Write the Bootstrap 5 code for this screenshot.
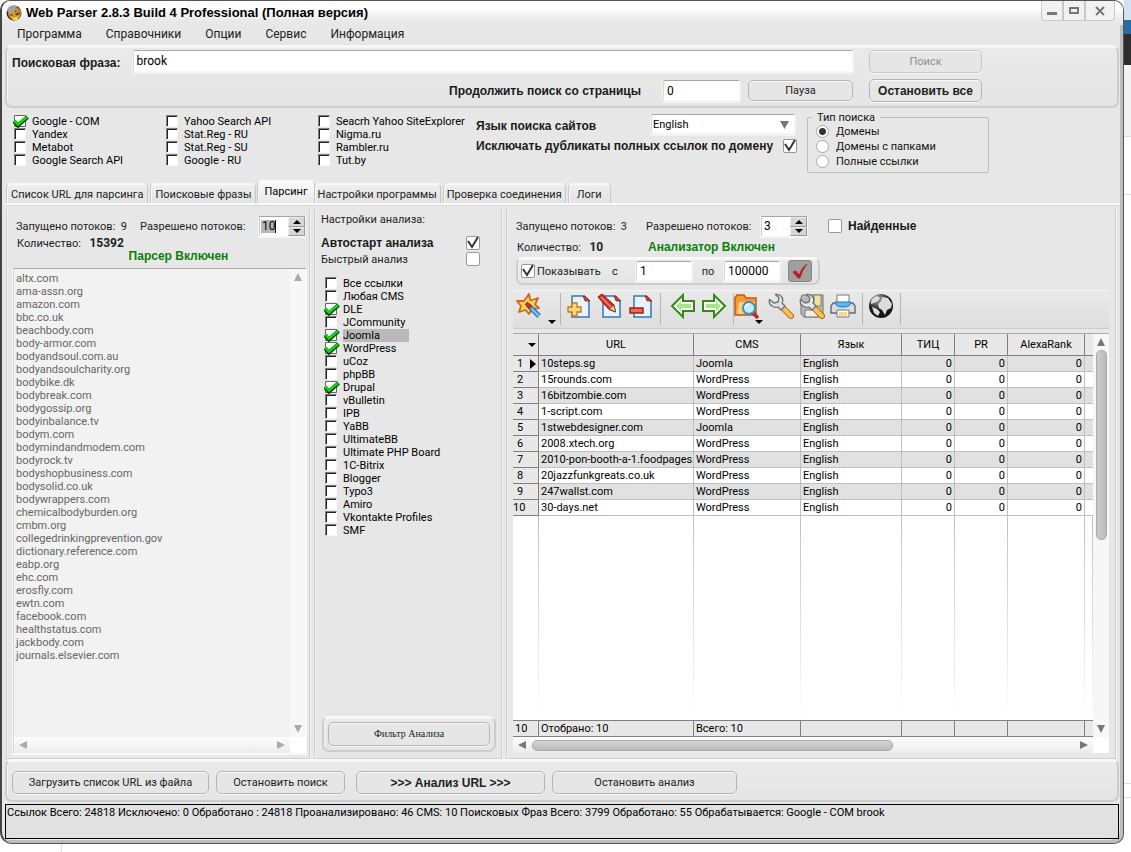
<!DOCTYPE html>
<html lang="ru">
<head>
<meta charset="utf-8">
<meta name="viewport" content="width=device-width, initial-scale=1">
<title>Web Parser 2.8.3 Build 4 Professional</title>
<link href="https://cdn.jsdelivr.net/npm/bootstrap@5.3.0/dist/css/bootstrap.min.css" rel="stylesheet">
<style>
:root{--face:#e7e7e7;--ui:Roboto,"Liberation Sans",sans-serif;--bold:"Liberation Sans",Arial,sans-serif}
html{background:linear-gradient(#d3e2ef 0 20px,#2b6ba3 20px 34px,#2d2d2d 34px 65px,#f3f3f3 65px 136px,#ddd 136px 137px,#fff 137px 194px,#ddd 194px 195px,#fff 195px 783px,#ddd 783px 784px,#fff 784px 797px,#ddd 797px 798px,#fff 798px) right top/7px 843px no-repeat,linear-gradient(#ddd,#ddd) 61px 100%/1px 10px no-repeat,#fff}
body{background:none;font-family:var(--ui);font-size:12px;line-height:13px;color:#111;min-height:100vh}
button,input,select{font-family:inherit;font-size:inherit;line-height:inherit;color:inherit}

/* Window frame */
.app{margin:0 7px 8px 0;background:var(--face);border:1px solid #555;border-left:2px solid #444;border-radius:10px 10px 10px 12px;box-shadow:inset -3px -3px 0 #bdbdbd;padding:0 4px 4px 3px;overflow:hidden}
.titlebar{height:24px;background:linear-gradient(#fff 0 6px,#fdfdfd 8px,#e8e8e8 20px);margin:0 -4px 0 -3px;padding-left:4px;font:bold 13px/16px var(--bold);color:#000}
.winbtns{height:20px;margin-right:8px}
.winbtns button{background:#f2f2f2;border:1px solid #c8c8c8;border-top:0;padding:0;width:22px}
.winbtns button:first-child{border-radius:0 0 0 4px}
.winbtns button:last-child{width:30px;border-radius:0 0 4px 0}
.menubar{height:20px;font:12px/16px var(--ui);padding:0 0 3px 12px;gap:24px}
.menubar a{color:#222;text-decoration:none}

/* Shared controls */
.panel{border:2px solid #cdcdcd;border-top-color:#fafafa;border-radius:7px;box-shadow:inset 1px 1px 0 #f4f4f4;background:linear-gradient(#eaeaea,#e5e5e5)}
.strong12{font:bold 12px/16px var(--bold);color:#1a1a1a}
.field{background:#fff;border:1px solid #f6f6f6;border-top:1px solid #a5a5a5;border-left-color:#d8d8d8;box-shadow:0 1px 0 1px #f3f3f3;border-radius:2px;padding:0 3px;height:21px;color:#000;min-width:0}
.pushbtn{background:#e6e6e6;border:1px solid #b5b5b5;border-radius:5px;box-shadow:inset 0 1px 0 #f8f8f8,0 1px 0 #f8f8f8;height:23px;padding:0;color:#222;font-size:11px}
.pushbtn.strong12{font-size:12px}
.pushbtn:disabled{color:#8e8e8e;border-color:#c6c6c6}
.tick{appearance:none;flex:none;width:14px;height:14px;margin:0;background:#fff;border:1px solid #999;border-radius:2px}
.tick:checked{background:#fff url("data:image/svg+xml,%3Csvg xmlns='http://www.w3.org/2000/svg' viewBox='0 0 12 12'%3E%3Cpath d='M1 4l4 6L11 0' fill='none' stroke='%23333' stroke-width='2'/%3E%3C/svg%3E") center no-repeat}
.lbl{font-size:11px;white-space:nowrap;color:#222}
.green{font:bold 12px/14px var(--bold);color:#0a7f0a}
.opt{display:flex;align-items:center;height:13px;white-space:nowrap;font-size:11px;color:#000}
.opt input{appearance:none;flex:none;width:12px;height:12px;margin:0 6px 1px 1px;background:#fff;border:1px solid #f8f8f8;border-top-color:#808080;border-left-color:#808080;box-shadow:inset 1px 1px 0 #222}
.opt input:checked{width:16px;height:13px;margin:0 3px 0 0;border:0;box-shadow:none;background:url("data:image/svg+xml,%3Csvg xmlns='http://www.w3.org/2000/svg' viewBox='0 0 16 13'%3E%3Cpath d='M1.500 .5h11v11h-11z' fill='%23fff' stroke='%23666'/%3E%3Cpath d='M1 6l4 4.500L14.500 2' fill='none' stroke='%23053b05' stroke-width='4'/%3E%3Cpath d='M1 5.500l4 4L14 2' fill='none' stroke='%2311d611' stroke-width='2.500'/%3E%3C/svg%3E") center/contain no-repeat}
.opt .picked{background:#b9b9b9;width:66px}

/* Search and options */
.search{height:63px;padding:3px 0 0 5px}
.phrase{width:841px}
.phrase .flex-grow-1{height:22px}
.more{margin-top:8px}
.more .field{width:77px;margin:0 8px 0 22px}
.more .pushbtn{width:105px;height:21px}
.stop{gap:6px}
.w-btn{width:113px}
.options{height:74px;padding:3px 0 0 8px}
.enginecol{width:152px;padding-top:4px}
.enginecol:nth-child(3){width:159px}
.langgrid{width:321px;padding-top:3px}
.lang{width:144px;appearance:none;background:#fff url("data:image/svg+xml,%3Csvg xmlns='http://www.w3.org/2000/svg' width='9' height='8'%3E%3Cpath d='M0 0h9L4.500 8z' fill='%23777'/%3E%3C/svg%3E") right 5px top 6px no-repeat;font-size:11px;height:20px;margin-right:2px;padding-left:1px}
.kind{width:182px;height:62px;border:1px solid #bdbdbd;border-radius:2px;padding:0 0 0 8px;margin:0 0 0 10px;min-width:0}
.kind legend{float:none;width:auto;font-size:11px;line-height:13px;margin:0 0 0 -4px;padding:0 5px}
.kind label{display:flex;align-items:center;height:15px;font-size:11px;gap:7px}
.kind input{appearance:none;width:13px;height:13px;margin:0;border:1px solid #a8a8a8;border-radius:50%;background:#fff}
.kind input:checked{background:radial-gradient(#333 0 3px,#fff 4px)}

/* Tabs */
.tabsrow{height:21px;padding-left:1px;gap:2px;align-items:flex-end}
.tabsrow button{border:1px solid #c6c6c6;border-top-color:#f8f8f8;border-bottom:0;border-radius:5px 5px 0 0;background:linear-gradient(#efefef,#e2e2e2);height:20px;padding:1px 3px 0;font-size:11px;color:#222;white-space:nowrap;box-shadow:inset 1px 1px 0 #fafafa}
.tabsrow .wide{padding:1px 4px 0}
.tabsrow .active{height:23px;padding:0 6px 2px;margin:0 -3px 0 -1px;background:linear-gradient(#fafafa,#e9e9e9);color:#000}
.page{border-top:2px solid #f9f9f9;box-shadow:inset 0 1px 0 #d8d8d8;flex:1 1 auto;padding:4px 3px 0 1px;gap:4px}
.col3{border:1px solid #cfcfcf;border-top:0;box-shadow:inset 1px 0 0 #f3f3f3,1px 0 0 #f3f3f3;background:var(--face);min-width:0}
.parser{flex:0 0 304px;padding:6px 3px 5px 6px}
.filters{flex:0 0 188px;padding:0 5px 6px 6px}
.analyzer{flex:1 1 0;padding:6px 6px 5px 6px}

/* Thread counters */
.spin{width:46px;height:20px;background:#fff;border-top:1px solid #a5a5a5;border-left:1px solid #ccc;box-shadow:0 1px 0 1px #f5f5f5}
.spin input{border:0;width:28px;padding:0 0 1px 2px;background:#fff;color:#000}
.spin .chosen{background:linear-gradient(#111,#111) 15px 3px/1px 13px no-repeat,linear-gradient(#b5b5b5,#b5b5b5) 1px 3px/14px 13px no-repeat,#fff}
.spin button{flex:1;border:1px solid #999;border-top-color:#eee;border-left-color:#eee;background:#d6d6d6;padding:0;display:flex;align-items:center;justify-content:center}
.prow{height:22px;padding-left:3px}
.l1{width:124px}.l2{width:119px}
.cnt{height:12px;margin-left:4px}
.cnt b{font-size:12px;padding-left:3px}
.gp{margin:0 0 5px;padding-left:38px}
.a1{width:130px}.a2{width:115px}
.found{gap:6px;margin-left:21px}
.a3{height:20px}
.a3 .l1{width:131px;height:auto}

/* URL list and scroll bars */
.listbox{background:#f2f2f2;border-top:1px solid #a9a9a9;border-left:1px solid #d5d5d5;box-shadow:0 1px 0 1px #f8f8f8}
.sites{font-size:11px;color:#666;padding:3px 0 0 2px;margin:0;list-style:none}
.vbar{flex:none;width:16px;background:#f7f7f7;padding:4px 0;align-items:center}
.hbar{height:16px;background:linear-gradient(#fdfdfd,#ececec);padding:0 5px;align-items:center}
.vthumb{width:11px;height:190px;border:1px solid #aaa;border-radius:5px;background:linear-gradient(90deg,#ccc,#bbb);margin-top:4px}
.hthumb{width:361px;height:11px;border:1px solid #aaa;border-radius:5px;background:linear-gradient(#d4d4d4,#bbb);margin-left:6px}

/* Filters */
.filters>.lbl{padding-top:4px}
.autorow{margin-top:8px;padding-right:16px;height:17px}
.fastrow{height:16px;padding-right:16px}
.cmslist{padding:10px 0 0 3px}
.filterbtn{margin-left:1px}
.filterbtn .pushbtn{font:10px/12px "Liberation Serif",serif;height:24px}

/* Analyzer */
.range{width:304px;height:28px;padding:0 6px 0 3px;margin:0 0 0 3px}
.range .field{width:56px;height:20px}
.r1{width:77px;padding-left:2px}.r2{width:24px}.r3{width:32px;text-align:center}
.okbtn{width:24px;height:22px;border:1px solid #888;border-radius:3px;background:#9f9f9f;padding:0}
.tools{height:39px;border-top:1px solid #f6f6f6;border-bottom:1px solid #ccc;margin-top:5px;background:linear-gradient(#e9e9e9,#dedede)}
.tools button{border:0;background:none;padding:0;width:31px;height:30px;display:flex;align-items:center;justify-content:center;flex:none}
.tools .drop{width:16px;height:34px;align-items:flex-end}
.tools .drop.over{margin-left:-12px;width:12px}
.divider{width:1px;height:32px;margin-top:2px;background:#b5b5b5;margin-right:2px;flex:none}
.gridbox{background:#fff;border-top:1px solid #a9a9a9;margin-top:4px}
.tablewrap{min-width:0}
.data{width:100%;table-layout:fixed;border-collapse:separate;border-spacing:0;font-size:11px;line-height:14px;color:#000}
.data td,.data th{padding:0 2px;height:16px;overflow:hidden;white-space:nowrap;border-right:1px solid #c0c0c0;border-bottom:1px solid #c0c0c0;font-weight:400}
.data td:nth-child(2){padding-right:0}
.data thead th{height:22px;text-align:center;background:#e8e8e8;border-color:#808080}
.data tbody th,.data tfoot td{background:#e8e8e8;border-color:#808080}
.data tbody th{text-align:left;padding-left:4px}
.data tbody tr:nth-child(odd) td{background:#e1e1e1}
.data .filler td,.data tbody .filler:nth-child(odd) td{height:auto;border-bottom:0;border-right:1px solid;border-image:linear-gradient(#c0c0c0,#fff) 1;background:#fff}
.data tfoot td{border-top:1px solid #808080;height:17px}
.data td:nth-child(n+5):not(:last-child){text-align:right}
.data .last{border-right:0}
.data .pointer{float:right;margin:2px 0 0}
.c1{width:26px}.c3{width:107px}.c4{width:101px}.c5{width:53px}.c7{width:77px}.c8{width:8px}

/* Bottom */
.bottom{height:43px;padding:4px 0 0 5px;gap:7px}
.b1{width:197px}.b2{width:129px}.b3{width:189px;margin-left:4px}.b4{width:185px}
.status{height:35px;border:1px solid #000;background:#e1e1e1;color:#000;font-size:11px;padding:1px;margin:2px 0 0;white-space:nowrap;overflow:hidden}
</style>
</head>
<body class="d-flex flex-column">
<main class="app flex-grow-1 d-flex flex-column">
 <header class="titlebar d-flex align-items-start">
  <svg class="mt-1 me-1 flex-shrink-0" width="16" height="16" viewBox="0 0 16 16"><circle cx="8" cy="8" r="7.500" fill="#3a2a18"/><path d="M1 5Q4 0 11 1L9 7 3 10z" fill="#a9a29a"/><path d="M9 2q6 1 6 6l-5-1z" fill="#c98a3a"/><path d="M2 9l7-2 6 1q-1 6-6 7Q4 15 2 9z" fill="#d99b21"/><path d="M4 9q1 3 3 1zM9 9q2 3 5-1z" fill="#33200c"/><path d="M5 12q4 2 8-1l-2 4H8z" fill="#ffd84a"/></svg>
  <span class="flex-grow-1 pt-1">Web Parser 2.8.3 Build 4 Professional (Полная версия)</span>
  <div class="winbtns d-flex">
   <button type="button" aria-label="Свернуть"><svg width="12" height="10"><path d="M1 6h10v3H1z" fill="#777"/></svg></button>
   <button type="button" aria-label="Развернуть"><svg width="12" height="10"><path d="M2 2h8v5H2z" fill="none" stroke="#777" stroke-width="2"/></svg></button>
   <button type="button" aria-label="Закрыть"><svg width="12" height="10"><path d="M2 1l8 8M10 1L2 9" stroke="#777" stroke-width="2"/></svg></button>
  </div>
 </header>
 <nav class="menubar d-flex align-items-center"><a href="#">Программа</a><a href="#">Справочники</a><a href="#">Опции</a><a href="#">Сервис</a><a href="#">Информация</a></nav>

 <section class="panel search d-flex">
  <div class="phrase">
   <div class="d-flex align-items-center gap-2"><label class="strong12 pt-1 me-1" for="q">Поисковая фраза:</label><input class="field flex-grow-1" id="q" value="brook"></div>
   <div class="d-flex justify-content-end align-items-center more"><label class="strong12" for="pg">Продолжить поиск со страницы</label><input class="field" id="pg" value="0"><button type="button" class="pushbtn">Пауза</button></div>
  </div>
  <div class="d-flex flex-column ms-3 stop"><button type="button" class="pushbtn w-btn" disabled>Поиск</button><button type="button" class="pushbtn w-btn strong12">Остановить все</button></div>
 </section>

 <section class="options d-flex">
  <div class="enginecol">
   <label class="opt"><input type="checkbox" checked><span>Google - COM</span></label>
   <label class="opt"><input type="checkbox"><span>Yandex</span></label>
   <label class="opt"><input type="checkbox"><span>Metabot</span></label>
   <label class="opt"><input type="checkbox"><span>Google Search API</span></label>
  </div>
  <div class="enginecol">
   <label class="opt"><input type="checkbox"><span>Yahoo Search API</span></label>
   <label class="opt"><input type="checkbox"><span>Stat.Reg - RU</span></label>
   <label class="opt"><input type="checkbox"><span>Stat.Reg - SU</span></label>
   <label class="opt"><input type="checkbox"><span>Google - RU</span></label>
  </div>
  <div class="enginecol">
   <label class="opt"><input type="checkbox"><span>Seacrh Yahoo SiteExplorer</span></label>
   <label class="opt"><input type="checkbox"><span>Nigma.ru</span></label>
   <label class="opt"><input type="checkbox"><span>Rambler.ru</span></label>
   <label class="opt"><input type="checkbox"><span>Tut.by</span></label>
  </div>
  <div class="langgrid">
   <div class="d-flex justify-content-between"><label class="strong12 pt-1" for="lg">Язык поиска сайтов</label><select class="field lang" id="lg"><option>English</option></select></div>
   <div class="d-flex justify-content-between align-items-center pt-1"><label class="strong12" for="dup">Исключать дубликаты полных ссылок по домену</label><input class="tick" type="checkbox" id="dup" checked></div>
  </div>
  <fieldset class="kind"><legend>Тип поиска</legend>
   <label><input type="radio" name="k" checked>Домены</label>
   <label><input type="radio" name="k">Домены с папками</label>
   <label><input type="radio" name="k">Полные ссылки</label>
  </fieldset>
 </section>

 <div class="tabsrow d-flex" role="tablist">
  <button type="button" role="tab" class="wide">Список URL для парсинга</button><button type="button" role="tab" class="wide">Поисковые фразы</button><button type="button" role="tab" class="active">Парсинг</button><button type="button" role="tab">Настройки программы</button><button type="button" role="tab">Проверка соединения</button><button type="button" role="tab" class="px-2">Логи</button>
 </div>

 <section class="page d-flex">
  <div class="col3 parser d-flex flex-column">
   <div class="prow d-flex align-items-center"><span class="lbl l1">Запущено потоков:&nbsp; 9</span><label class="lbl l2" for="t1">Разрешено потоков:</label>
    <div class="spin d-flex"><input id="t1" class="chosen" value="10"><div class="flex-grow-1 d-flex flex-column"><button type="button" aria-label="Больше"><svg width="8" height="4"><path d="M4 0l4 4H0z"/></svg></button><button type="button" aria-label="Меньше"><svg width="8" height="4"><path d="M0 0h8L4 4z"/></svg></button></div></div></div>
   <div class="lbl cnt">Количество:&nbsp; <b>15392</b></div>
   <div class="green text-center gp">Парсер Включен</div>
   <div class="listbox d-flex flex-column flex-grow-1">
    <div class="d-flex flex-grow-1">
     <ul class="sites flex-grow-1"><li>altx.com</li><li>ama-assn.org</li><li>amazon.com</li><li>bbc.co.uk</li><li>beachbody.com</li><li>body-armor.com</li><li>bodyandsoul.com.au</li><li>bodyandsoulcharity.org</li><li>bodybike.dk</li><li>bodybreak.com</li><li>bodygossip.org</li><li>bodyinbalance.tv</li><li>bodym.com</li><li>bodymindandmodem.com</li><li>bodyrock.tv</li><li>bodyshopbusiness.com</li><li>bodysolid.co.uk</li><li>bodywrappers.com</li><li>chemicalbodyburden.org</li><li>cmbm.org</li><li>collegedrinkingprevention.gov</li><li>dictionary.reference.com</li><li>eabp.org</li><li>ehc.com</li><li>erosfly.com</li><li>ewtn.com</li><li>facebook.com</li><li>healthstatus.com</li><li>jackbody.com</li><li>journals.elsevier.com</li></ul>
     <div class="vbar d-flex flex-column justify-content-between"><svg width="8" height="8"><path d="M4 0l4 8H0z" fill="#aaa"/></svg><svg width="8" height="8"><path d="M0 0h8L4 8z" fill="#aaa"/></svg></div>
    </div>
    <div class="d-flex bg-white"><div class="hbar d-flex flex-grow-1 justify-content-between"><svg width="8" height="8"><path d="M0 4l8-4v8z" fill="#aaa"/></svg><svg width="8" height="8"><path d="M8 4L0 0v8z" fill="#aaa"/></svg></div><div class="vbar bg-white"></div></div>
   </div>
  </div>

  <div class="col3 filters d-flex flex-column">
   <div class="lbl">Настройки анализа:</div>
   <div class="d-flex justify-content-between align-items-center autorow"><label class="strong12" for="au">Автостарт анализа</label><input class="tick" type="checkbox" id="au" checked></div>
   <div class="d-flex justify-content-between align-items-center fastrow"><label class="lbl" for="fa">Быстрый анализ</label><input class="tick" type="checkbox" id="fa"></div>
   <div class="cmslist flex-grow-1">
    <label class="opt"><input type="checkbox"><span>Все ссылки</span></label>
    <label class="opt"><input type="checkbox"><span>Любая CMS</span></label>
    <label class="opt"><input type="checkbox" checked><span>DLE</span></label>
    <label class="opt"><input type="checkbox"><span>JCommunity</span></label>
    <label class="opt"><input type="checkbox" checked><span class="picked">Joomla</span></label>
    <label class="opt"><input type="checkbox" checked><span>WordPress</span></label>
    <label class="opt"><input type="checkbox"><span>uCoz</span></label>
    <label class="opt"><input type="checkbox"><span>phpBB</span></label>
    <label class="opt"><input type="checkbox" checked><span>Drupal</span></label>
    <label class="opt"><input type="checkbox"><span>vBulletin</span></label>
    <label class="opt"><input type="checkbox"><span>IPB</span></label>
    <label class="opt"><input type="checkbox"><span>YaBB</span></label>
    <label class="opt"><input type="checkbox"><span>UltimateBB</span></label>
    <label class="opt"><input type="checkbox"><span>Ultimate PHP Board</span></label>
    <label class="opt"><input type="checkbox"><span>1C-Bitrix</span></label>
    <label class="opt"><input type="checkbox"><span>Blogger</span></label>
    <label class="opt"><input type="checkbox"><span>Typo3</span></label>
    <label class="opt"><input type="checkbox"><span>Amiro</span></label>
    <label class="opt"><input type="checkbox"><span>Vkontakte Profiles</span></label>
    <label class="opt"><input type="checkbox"><span>SMF</span></label>
   </div>
   <div class="panel filterbtn p-1"><button type="button" class="pushbtn w-100">Фильтр Анализа</button></div>
  </div>

  <div class="col3 analyzer d-flex flex-column">
   <div class="prow d-flex align-items-center"><span class="lbl l1 a1">Запущено потоков:&nbsp; 3</span><label class="lbl l2 a2" for="t2">Разрешено потоков:</label>
    <div class="spin d-flex"><input id="t2" value="3"><div class="flex-grow-1 d-flex flex-column"><button type="button" aria-label="Больше"><svg width="8" height="4"><path d="M4 0l4 4H0z"/></svg></button><button type="button" aria-label="Меньше"><svg width="8" height="4"><path d="M0 0h8L4 4z"/></svg></button></div></div>
    <label class="strong12 d-flex align-items-center found"><input class="tick" type="checkbox">Найденные</label></div>
   <div class="d-flex align-items-center a3"><span class="lbl l1 cnt">Количество:&nbsp; <b>10</b></span><span class="green">Анализатор Включен</span></div>
   <div class="panel range d-flex align-items-center"><input class="tick" type="checkbox" id="sh" checked><label class="lbl r1" for="sh">Показывать</label><label class="lbl r2" for="f">с</label><input class="field" id="f" value="1"><label class="lbl r3" for="t">по</label><input class="field" id="t" value="100000"><button type="button" class="okbtn ms-2 d-flex align-items-center justify-content-center" aria-label="Применить"><svg width="18" height="18" viewBox="0 0 18 18"><path d="M2 10l3-1 3 4Q11 5 16 2q-5 6-7 14H7z" fill="#e01010" stroke="#801010" stroke-width=".5"/></svg></button></div>
   <div class="tools d-flex">
    <button type="button" aria-label="Мастер"><svg width="28" height="28" viewBox="0 0 28 28"><path d="M14 2l1.500 6.500L23 6l-3 6.500 4 3.500-7 1-3 5-3.500-4L4 20l2-6-4-5 7 0z" fill="#ffd257" stroke="#d0681c" stroke-width="1.800" stroke-linejoin="round"/><path d="M13 13l11 11" stroke="#1566b0" stroke-width="5"/><path d="M13 13l11 11" stroke="#67c1f5" stroke-width="3"/><path d="M11 11l5 5" stroke="#b0392a" stroke-width="4"/></svg></button>
    <button type="button" class="drop" aria-label="Меню мастера"><svg width="8" height="5"><path d="M0 0h8L4 4z"/></svg></button>
    <span class="divider"></span>
    <button type="button" aria-label="Добавить"><svg width="26" height="26" viewBox="0 0 26 26"><path d="M6 3h12l5 5v16H6z" fill="#e8f4fd" stroke="#3478b4" stroke-width="1.500"/><path d="M17 3h2l5 5h-5z" fill="#d63b2b" stroke="#7a241b" stroke-width=".7"/><path d="M6 10h5v4h4v5h-4v4H6v-4H2v-5h4z" fill="#ffd574" stroke="#b97a1d" stroke-width="1.300"/></svg></button>
    <button type="button" aria-label="Изменить"><svg width="26" height="26" viewBox="0 0 26 26"><path d="M6 3h12l5 5v16H6z" fill="#e8f4fd" stroke="#3478b4" stroke-width="1.500"/><path d="M17 3h2l5 5h-5z" fill="#d63b2b" stroke="#7a241b" stroke-width=".7"/><path d="M1 4l4-3 12 11 1.500 7-6.500-2.500z" fill="#dc2f22" stroke="#84130d"/><path d="M4 4l10 10" stroke="#ff8b7d" stroke-width="1.500"/><path d="M12 16l5-4 1.500 7z" fill="#f6cb82" stroke="#633" stroke-width=".7"/></svg></button>
    <button type="button" aria-label="Удалить"><svg width="26" height="26" viewBox="0 0 26 26"><path d="M6 3h12l5 5v16H6z" fill="#e8f4fd" stroke="#3478b4" stroke-width="1.500"/><path d="M17 3h2l5 5h-5z" fill="#d63b2b" stroke="#7a241b" stroke-width=".7"/><path d="M2 15h13v5H2z" fill="#f06a55" stroke="#9c2018" stroke-width="1.500"/></svg></button>
    <span class="divider ms-1"></span>
    <span class="ps-1"></span>
    <button type="button" aria-label="Назад"><svg width="26" height="26" viewBox="0 0 26 26"><path d="M2 13L13 2v6h11v10H13v6z" fill="#fff" stroke="#338a14" stroke-width="2"/><path d="M6 13l5-5v3h10v4H11v3z" fill="#a7e58a"/></svg></button>
    <button type="button" aria-label="Вперёд"><svg width="26" height="26" viewBox="0 0 26 26"><path d="M24 13L13 2v6H2v10h11v6z" fill="#fff" stroke="#338a14" stroke-width="2"/><path d="M20 13l-5-5v3H5v4h10v3z" fill="#a7e58a"/></svg></button>
    <span class="divider ms-1 me-0"></span>
    <button type="button" aria-label="Поиск в папке" class="justify-content-start"><svg width="26" height="26" viewBox="0 0 26 26"><path d="M1 5l2-3h7l2 3h10v17H1z" fill="#f39a30" stroke="#c45b0b" stroke-width="1.500"/><path d="M5 9h16v12H3z" fill="#ffcf82"/><path d="M19 20l5 5" stroke="#b92a1c" stroke-width="3.500"/><circle cx="15" cy="15" r="6" fill="#c6ecfb" stroke="#3b8fc9" stroke-width="2"/><path d="M11 15q1-4 4-4" stroke="#fff" stroke-width="1.500" fill="none"/></svg></button>
    <button type="button" class="drop over" aria-label="Меню поиска"><svg width="8" height="5"><path d="M0 0h8L4 4z"/></svg></button>
    <button type="button" aria-label="Настройки"><svg width="26" height="26" viewBox="0 0 26 26"><path d="M14 14l9 9" stroke="#b06a12" stroke-width="6" stroke-linecap="round"/><path d="M14 14l9 9" stroke="#ffc055" stroke-width="4" stroke-linecap="round"/><path d="M7.500 1.500L11 5l-1 4-4 1-4.500-3.500Q.5 11 4 13q3 2 6 1l3 3 4-4-3-3q2-4-1-7-2.500-2-5.500-1.500z" fill="#dfe2e5" stroke="#6d7276" stroke-width="1.300" stroke-linejoin="round"/></svg></button>
    <button type="button" aria-label="Сохранить настройки"><svg width="26" height="26" viewBox="0 0 26 26"><path d="M3 2h21v22H5l-3-3V5z" fill="#b9b9b4" stroke="#70706c"/><path d="M15 2h7v11h-7z" fill="#efe2a4" stroke="#8d8355"/><path d="M6 17h13v7H6z" fill="#eee" stroke="#777"/><path d="M14 14l9 9" stroke="#b06a12" stroke-width="6" stroke-linecap="round"/><path d="M14 14l9 9" stroke="#ffc055" stroke-width="4" stroke-linecap="round"/><path d="M7.500 1.500L11 5l-1 4-4 1-4.500-3.500Q.5 11 4 13q3 2 6 1l3 3 4-4-3-3q2-4-1-7-2.500-2-5.500-1.500z" fill="#e6e8ea" stroke="#6d7276" stroke-width="1.300" stroke-linejoin="round"/></svg></button>
    <button type="button" aria-label="Печать"><svg width="26" height="26" viewBox="0 0 26 26"><path d="M7 2h12v9H7z" fill="#fff" stroke="#777"/><path d="M3 10h20l2 3v7H1v-7z" fill="#d9dce0" stroke="#696e75" stroke-width="1.500"/><path d="M5 9h16q0 5-8 5T5 9z" fill="#55b9f0" stroke="#2878af"/><path d="M7 17h12v7H7z" fill="#fff" stroke="#777"/><path d="M9 19h8v4H9z" fill="#f9d98c"/></svg></button>
    <span class="divider ms-1"></span>
    <button type="button" aria-label="Интернет"><svg width="26" height="26" viewBox="0 0 26 26"><defs><radialGradient id="gl" cx=".35" cy=".2"><stop stop-color="#aaa"/><stop offset="1" stop-color="#161616"/></radialGradient></defs><circle cx="13" cy="13" r="12" fill="url(#gl)"/><path d="M3 8q2-4 6-5l3 2-2 3-4 2-3 1zM14 4l6 1 4 6-1 4-4 2-2 5-3-5-3-2-1-4 3-3zM4 14l5 2 3 3-2 4-4-3z" fill="#dcdcdc"/></svg></button>
    <span class="divider ms-1"></span>
   </div>
   <div class="gridbox flex-grow-1 d-flex flex-column">
    <div class="d-flex flex-grow-1">
     <div class="d-flex flex-grow-1 tablewrap">
      <table class="data">
       <colgroup><col class="c1"><col><col class="c3"><col class="c4"><col class="c5"><col class="c5"><col class="c7"><col class="c8"></colgroup>
       <thead><tr><th><svg class="pointer" width="8" height="9"><path d="M0 2h8L4 6z"/></svg></th><th>URL</th><th>CMS</th><th>Язык</th><th>ТИЦ</th><th>PR</th><th>AlexaRank</th><th class="last"></th></tr></thead>
       <tbody>
        <tr><th>1<svg class="pointer" width="6" height="10"><path d="M0 0l6 5-6 5z"/></svg></th><td>10steps.sg</td><td>Joomla</td><td>English</td><td>0</td><td>0</td><td>0</td><td class="last"></td></tr>
        <tr><th>2</th><td>15rounds.com</td><td>WordPress</td><td>English</td><td>0</td><td>0</td><td>0</td><td class="last"></td></tr>
        <tr><th>3</th><td>16bitzombie.com</td><td>WordPress</td><td>English</td><td>0</td><td>0</td><td>0</td><td class="last"></td></tr>
        <tr><th>4</th><td>1-script.com</td><td>WordPress</td><td>English</td><td>0</td><td>0</td><td>0</td><td class="last"></td></tr>
        <tr><th>5</th><td>1stwebdesigner.com</td><td>Joomla</td><td>English</td><td>0</td><td>0</td><td>0</td><td class="last"></td></tr>
        <tr><th>6</th><td>2008.xtech.org</td><td>WordPress</td><td>English</td><td>0</td><td>0</td><td>0</td><td class="last"></td></tr>
        <tr><th>7</th><td>2010-pon-booth-a-1.foodpages.c</td><td>WordPress</td><td>English</td><td>0</td><td>0</td><td>0</td><td class="last"></td></tr>
        <tr><th>8</th><td>20jazzfunkgreats.co.uk</td><td>WordPress</td><td>English</td><td>0</td><td>0</td><td>0</td><td class="last"></td></tr>
        <tr><th>9</th><td>247wallst.com</td><td>WordPress</td><td>English</td><td>0</td><td>0</td><td>0</td><td class="last"></td></tr>
        <tr><th class="px-0">10</th><td>30-days.net</td><td>WordPress</td><td>English</td><td>0</td><td>0</td><td>0</td><td class="last"></td></tr>
        <tr class="filler"><td></td><td></td><td></td><td></td><td></td><td></td><td></td><td class="last"></td></tr>
       </tbody>
       <tfoot><tr><td>10</td><td>Отобрано: 10</td><td>Всего: 10</td><td></td><td></td><td></td><td></td><td class="last"></td></tr></tfoot>
      </table>
     </div>
     <div class="vbar d-flex flex-column"><svg class="flex-shrink-0" width="8" height="8"><path d="M4 0l4 8H0z" fill="#777"/></svg><div class="vthumb"></div><svg class="mt-auto flex-shrink-0" width="8" height="8"><path d="M0 0h8L4 8z" fill="#777"/></svg></div>
    </div>
    <div class="d-flex"><div class="hbar d-flex flex-grow-1"><svg width="8" height="8"><path d="M0 4l8-4v8z" fill="#777"/></svg><div class="hthumb"></div><svg class="ms-auto" width="8" height="8"><path d="M8 4L0 0v8z" fill="#777"/></svg></div><div class="vbar bg-white"></div></div>
   </div>
  </div>
 </section>

 <footer class="panel bottom d-flex align-items-center"><button type="button" class="pushbtn b1">Загрузить список URL из файла</button><button type="button" class="pushbtn b2">Остановить поиск</button><button type="button" class="pushbtn b3 strong12">&gt;&gt;&gt; Анализ URL &gt;&gt;&gt;</button><button type="button" class="pushbtn b4">Остановить анализ</button></footer>
 <p class="status">Ссылок Всего: 24818 Исключено: 0 Обработано : 24818 Проанализировано: 46 CMS: 10 Поисковых Фраз Всего: 3799 Обработано: 55 Обрабатывается: Google - COM brook</p>
</main>
<script src="https://cdn.jsdelivr.net/npm/bootstrap@5.3.0/dist/js/bootstrap.bundle.min.js"></script>
</body>
</html>
